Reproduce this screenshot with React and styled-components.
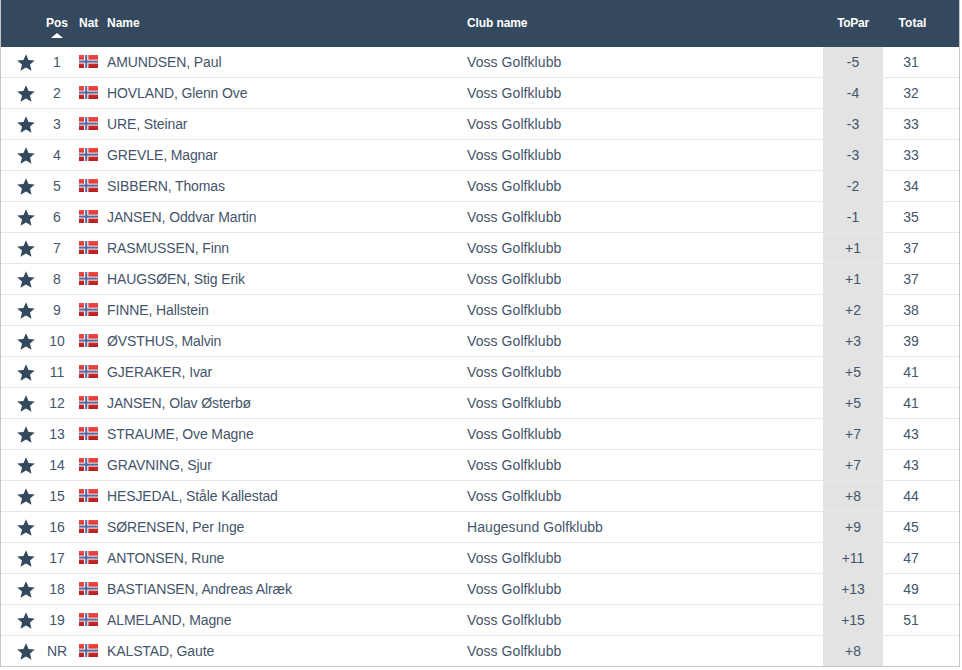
import styled, { createGlobalStyle } from "styled-components"

const GlobalStyle = createGlobalStyle`
  html, body {
    margin: 0;
    padding: 0;
    background: #fff;
  }
`

const COLUMNS = "45px 22px 39px 360px 356px 60px 56px 1fr"

const Board = styled.div`
  width: 960px;
  box-sizing: border-box;
  border: 1px solid #c3c8cc;
  border-top: none;
  font-family: "Liberation Sans", Arial, sans-serif;
  font-size: 14px;
  color: #44546a;
`
const HeaderRow = styled.div`
  display: grid;
  grid-template-columns: ${COLUMNS};
  height: 47px;
  background: #34495e;
  color: #fff;
  font-size: 12px;
  font-weight: bold;
`
const HeadCell = styled.div`
  display: flex;
  flex-direction: column;
  align-items: ${(p) => (p.$center ? "center" : "flex-start")};
  padding-top: 16px;
  padding-left: ${(p) => p.$indent || 0}px;
  letter-spacing: ${(p) => p.$tight || 0}px;
  line-height: 14px;
  white-space: nowrap;
`
const SortArrow = styled.span`
  width: 0;
  height: 0;
  margin-top: 3px;
  border-left: 6px solid transparent;
  border-right: 6px solid transparent;
  border-bottom: 5px solid #fff;
`
const Row = styled.div`
  display: grid;
  grid-template-columns: ${COLUMNS};
  height: ${(p) => (p.$last ? 30 : 31)}px;
  box-sizing: border-box;
  border-bottom: ${(p) => (p.$last ? "none" : "1px solid #e8e8e8")};
`
const Cell = styled.div`
  display: flex;
  align-items: center;
  justify-content: ${(p) => (p.$center ? "center" : "flex-start")};
  padding-left: ${(p) => p.$indent || 0}px;
  white-space: nowrap;
`
const NameCell = styled(Cell)`
  letter-spacing: -0.11px;
`
const ClubCell = styled(Cell)`
  letter-spacing: 0.07px;
`
const ParCell = styled(Cell)`
  background: #e3e3e3;
`
const IconBox = styled.span`
  display: flex;
`
const FlagBox = styled(IconBox)`
  padding-bottom: 1px;
`

const Star = () => (
  <svg width="18" height="17" viewBox="0 0 18 17">
    <polygon
      fill="#34495e"
      points="9,0.3 11.5,6 17.8,6.5 13,10.6 14.5,16.8 9,13.5 3.5,16.8 5,10.6 0.2,6.5 6.5,6"
    />
  </svg>
)

const Flag = () => (
  <svg width="19" height="13" viewBox="0 0 19 13">
    <defs>
      <linearGradient id="flagRed" x1="0" y1="0" x2="0" y2="1">
        <stop offset="0" stopColor="#f04a45" />
        <stop offset="0.5" stopColor="#dc2f2c" />
        <stop offset="1" stopColor="#b3201f" />
      </linearGradient>
    </defs>
    <rect width="19" height="13" fill="url(#flagRed)" />
    <rect x="5" width="4.4" height="13" fill="#f4f1f1" />
    <rect y="4.6" width="19" height="4" fill="#f4f1f1" />
    <rect x="6.2" width="2" height="13" fill="#55689f" />
    <rect y="5.6" width="19" height="2" fill="#55689f" />
  </svg>
)

const players = [
  ["1", "AMUNDSEN, Paul", "Voss Golfklubb", "-5", "31"],
  ["2", "HOVLAND, Glenn Ove", "Voss Golfklubb", "-4", "32"],
  ["3", "URE, Steinar", "Voss Golfklubb", "-3", "33"],
  ["4", "GREVLE, Magnar", "Voss Golfklubb", "-3", "33"],
  ["5", "SIBBERN, Thomas", "Voss Golfklubb", "-2", "34"],
  ["6", "JANSEN, Oddvar Martin", "Voss Golfklubb", "-1", "35"],
  ["7", "RASMUSSEN, Finn", "Voss Golfklubb", "+1", "37"],
  ["8", "HAUGSØEN, Stig Erik", "Voss Golfklubb", "+1", "37"],
  ["9", "FINNE, Hallstein", "Voss Golfklubb", "+2", "38"],
  ["10", "ØVSTHUS, Malvin", "Voss Golfklubb", "+3", "39"],
  ["11", "GJERAKER, Ivar", "Voss Golfklubb", "+5", "41"],
  ["12", "JANSEN, Olav Østerbø", "Voss Golfklubb", "+5", "41"],
  ["13", "STRAUME, Ove Magne", "Voss Golfklubb", "+7", "43"],
  ["14", "GRAVNING, Sjur", "Voss Golfklubb", "+7", "43"],
  ["15", "HESJEDAL, Ståle Kallestad", "Voss Golfklubb", "+8", "44"],
  ["16", "SØRENSEN, Per Inge", "Haugesund Golfklubb", "+9", "45"],
  ["17", "ANTONSEN, Rune", "Voss Golfklubb", "+11", "47"],
  ["18", "BASTIANSEN, Andreas Alræk", "Voss Golfklubb", "+13", "49"],
  ["19", "ALMELAND, Magne", "Voss Golfklubb", "+15", "51"],
  ["NR", "KALSTAD, Gaute", "Voss Golfklubb", "+8", ""],
]

const App = () => (
  <>
    <GlobalStyle />
    <Board>
      <HeaderRow>
        <HeadCell />
        <HeadCell $center>
          <span>Pos</span>
          <SortArrow />
        </HeadCell>
        <HeadCell $indent={11}>Nat</HeadCell>
        <HeadCell>Name</HeadCell>
        <HeadCell $tight={-0.1}>Club name</HeadCell>
        <HeadCell $center $tight={-0.3}>ToPar</HeadCell>
        <HeadCell $center $indent={3}>Total</HeadCell>
        <HeadCell />
      </HeaderRow>
      {players.map(([pos, name, club, par, total], i) => (
        <Row key={pos} $last={i === players.length - 1}>
          <Cell $indent={16}>
            <IconBox>
              <Star />
            </IconBox>
          </Cell>
          <Cell $center>{pos}</Cell>
          <Cell $indent={11}>
            <FlagBox>
              <Flag />
            </FlagBox>
          </Cell>
          <NameCell>{name}</NameCell>
          <ClubCell>{club}</ClubCell>
          <ParCell $center>{par}</ParCell>
          <Cell $center>{total}</Cell>
          <Cell />
        </Row>
      ))}
    </Board>
  </>
)

export default App
